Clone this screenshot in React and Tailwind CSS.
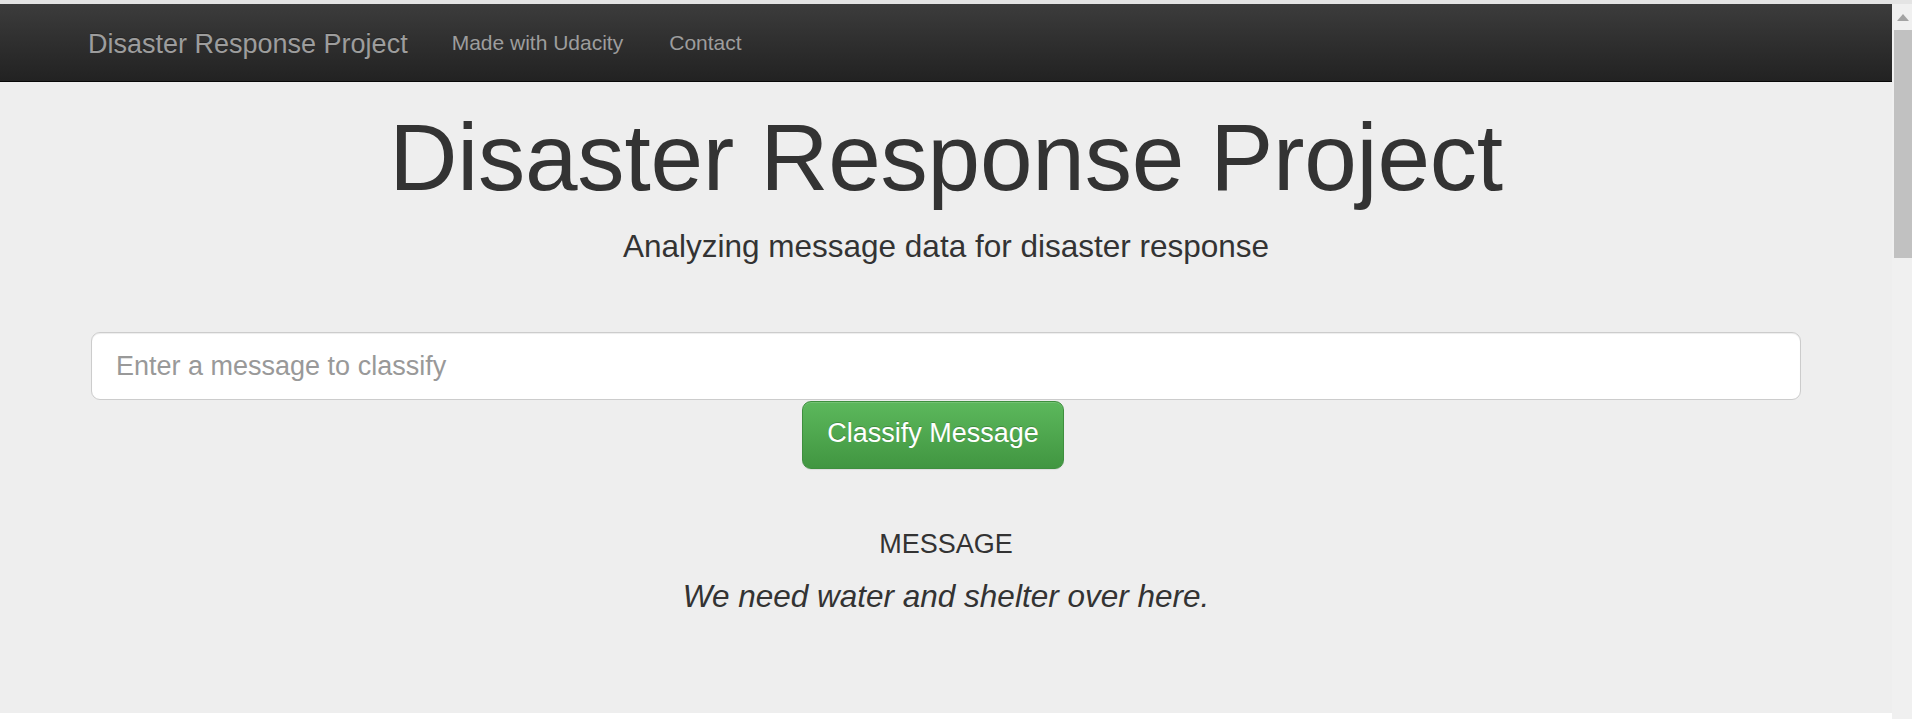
import React, { useState } from 'react';

function Navbar() {
  return (
    <nav className="h-[78px] border-b-[1.5px] border-[#080808] bg-gradient-to-b from-[#3c3c3c] to-[#222222]">
      <div className="mx-auto flex h-full w-[1712px] items-center">
        <a href="#" className="-ml-[2px] pt-[3px] text-[27px] leading-none text-[#9d9d9d] [text-shadow:0_-1px_0_rgba(0,0,0,0.25)]">
          Disaster Response Project
        </a>
        <ul className="ml-[44px] flex items-center gap-[46px] text-[21px] leading-none text-[#9d9d9d]">
          <li>
            <a href="#">Made with Udacity</a>
          </li>
          <li>
            <a href="#">Contact</a>
          </li>
        </ul>
      </div>
    </nav>
  );
}

function Scrollbar() {
  return (
    <div className="flex w-[20px] flex-col items-end bg-[#f0f0f0]">
      <div className="flex h-[26px] w-full items-center justify-center pl-[2px]">
        <svg width="12" height="7" viewBox="0 0 12 7">
          <polygon points="6,0 12,7 0,7" fill="#a3a3a3" />
        </svg>
      </div>
      <div className="h-[228px] w-[18px] bg-[#c1c1c1]" />
    </div>
  );
}

export default function App() {
  const [message, setMessage] = useState('');

  return (
    <div className="flex h-[719px] flex-col overflow-hidden bg-white font-['Liberation_Sans',Arial,sans-serif] text-[#333333]">
      <div className="h-[4px] bg-[#e4e4e4]" />
      <div className="flex flex-1">
        <div className="flex-1">
          <Navbar />

          <div className="h-[631px] bg-[#eeeeee] pt-[23px]">
            <div className="mx-auto w-[1710px]">
              <h1 className="text-center text-[94.5px] leading-[104px] tracking-[-0.2px]">
                Disaster Response Project
              </h1>
              <p className="mt-[20px] text-center text-[31.5px] leading-[34px]">
                Analyzing message data for disaster response
              </p>

              <form className="mt-[69px]" onSubmit={(e) => e.preventDefault()}>
                <input
                  type="text"
                  value={message}
                  onChange={(e) => setMessage(e.target.value)}
                  placeholder="Enter a message to classify"
                  className="block h-[68px] w-full rounded-[9px] border-[1.5px] border-[#cccccc] bg-white px-[24px] text-[27px] text-[#555555] shadow-[inset_0_1px_1px_rgba(0,0,0,0.075)] outline-none placeholder:text-[#999999]"
                />
                <button
                  type="submit"
                  className="ml-[711px] mt-[1px] flex h-[68px] w-[262px] items-center justify-center rounded-[9px] border-[1.5px] border-[#3e8f3e] bg-gradient-to-b from-[#5cb85c] to-[#419641] pb-[3px] text-[27px] text-white shadow-[inset_0_1px_0_rgba(255,255,255,0.15),0_1px_1px_rgba(0,0,0,0.075)] [text-shadow:0_-1px_0_rgba(0,0,0,0.2)]"
                >
                  Classify Message
                </button>
              </form>

              <h4 className="mt-[60px] text-center text-[27px] leading-[30px]">MESSAGE</h4>
              <p className="mt-[20px] text-center text-[31.5px] italic leading-[34px]">
                We need water and shelter over here.
              </p>
            </div>
          </div>
        </div>
        <Scrollbar />
      </div>
    </div>
  );
}
